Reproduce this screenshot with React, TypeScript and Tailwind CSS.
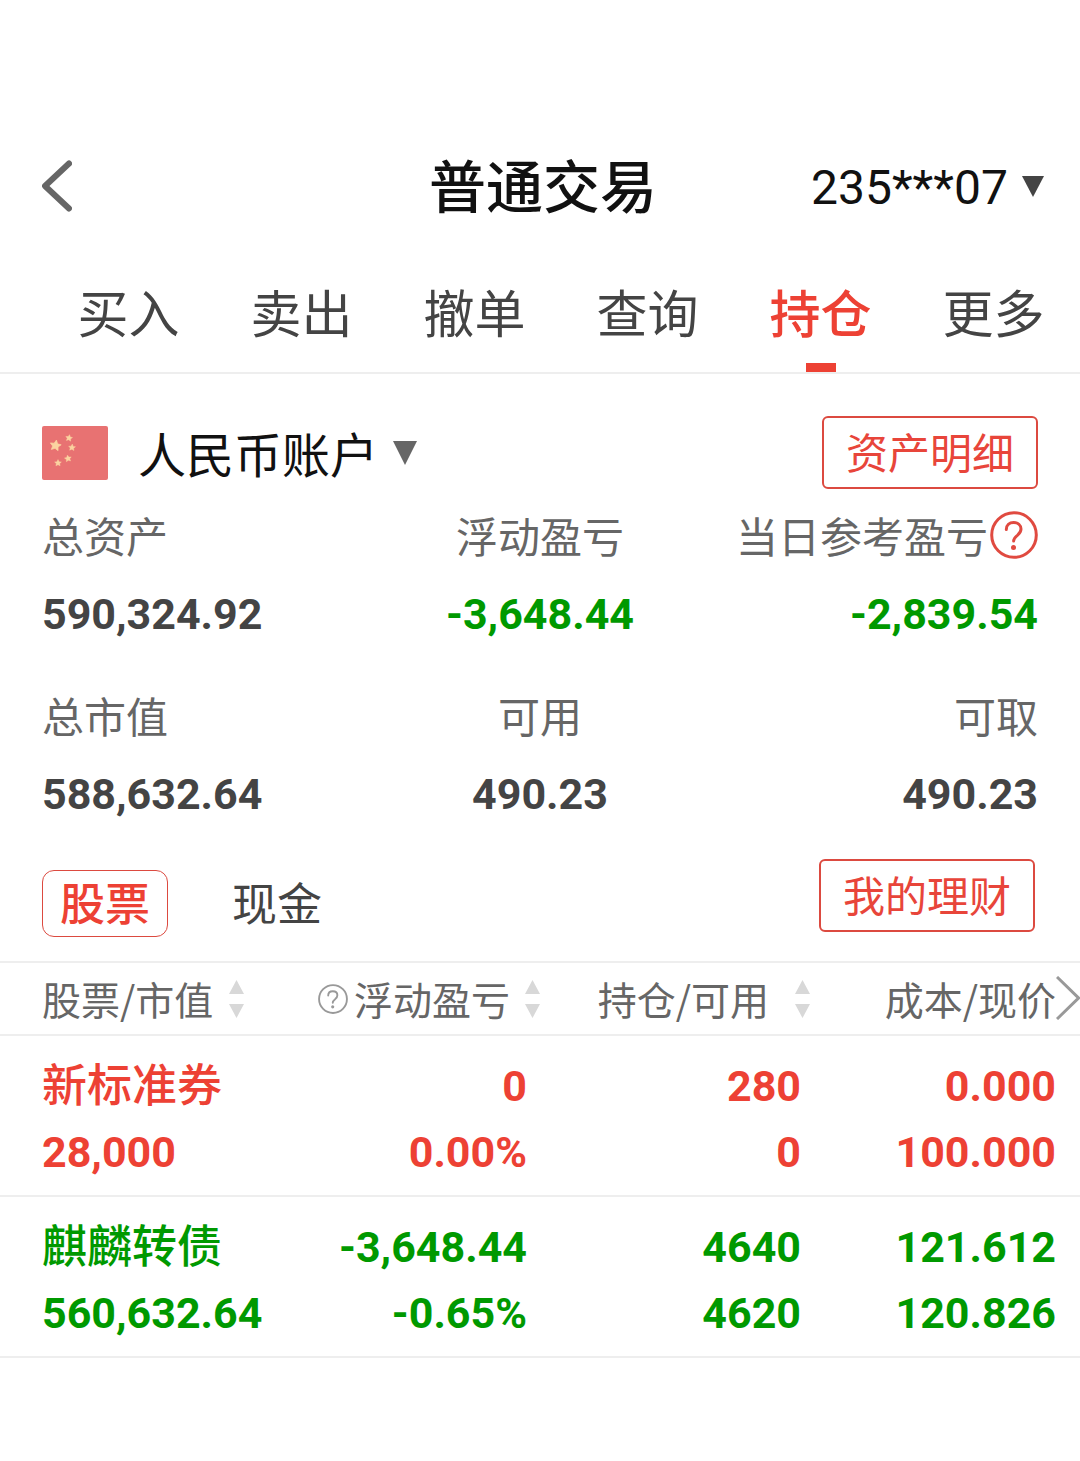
import { useState } from "react";

const RED = "text-[#ed4134]";
const GREEN = "text-[#009900]";
const NUM = "font-['Roboto','Noto_Sans_CJK_SC',sans-serif] font-bold";

const tabs = ["买入", "卖出", "撤单", "查询", "持仓", "更多"];

const summary = [
  { label: "总资产", value: "590,324.92", color: "text-[#444444]" },
  { label: "浮动盈亏", value: "-3,648.44", color: GREEN },
  { label: "当日参考盈亏", value: "-2,839.54", color: GREEN, help: true },
  { label: "总市值", value: "588,632.64", color: "text-[#444444]" },
  { label: "可用", value: "490.23", color: "text-[#444444]" },
  { label: "可取", value: "490.23", color: "text-[#444444]" },
];

const aligns = ["items-start", "items-center", "items-end"];

const holdings = [
  {
    name: "新标准券",
    marketValue: "28,000",
    profit: "0",
    profitRate: "0.00%",
    amount: "280",
    available: "0",
    cost: "0.000",
    price: "100.000",
    color: RED,
  },
  {
    name: "麒麟转债",
    marketValue: "560,632.64",
    profit: "-3,648.44",
    profitRate: "-0.65%",
    amount: "4640",
    available: "4620",
    cost: "121.612",
    price: "120.826",
    color: GREEN,
  },
];

function HelpIcon({ className }: { className: string }) {
  return (
    <svg viewBox="0 0 48 48" fill="none" stroke="currentColor" strokeWidth="3" className={className}>
      <circle cx="24" cy="24" r="22.3" />
      <path d="M16.300 18.500c0-4.400 3.100-7 7.300-7 4.300 0 7.400 2.600 7.400 6.600 0 2.800-1.400 4.300-3.400 6-2.500 2-4 3.100-4 5.900" strokeLinecap="round" />
      <circle cx="23.500" cy="36.500" r="2.500" fill="currentColor" stroke="none" />
    </svg>
  );
}

function Triangle({ className }: { className: string }) {
  return (
    <svg viewBox="0 0 24 24" fill="currentColor" preserveAspectRatio="none" className={className} aria-hidden="true">
      <path d="M0 0h24L12 24z" />
    </svg>
  );
}

function SortArrows() {
  return (
    <svg viewBox="0 0 15 38" fill="#d8d8d8" className="h-[38px] w-[15px] shrink-0" aria-hidden="true">
      <path d="M7.500 0L15 14H0zM0 24h15L7.500 38z" />
    </svg>
  );
}

const STAR = "M0-5L1.600-1.800 5-1.500 2.500.9 3.100 4.200 0 2.600-3.100 4.200-2.500.9-5-1.500-1.600-1.800z";

function Flag() {
  return (
    <svg viewBox="0 0 66 54" className="h-[54px] w-[66px]" role="img" aria-label="CNY">
      <rect width="66" height="54" rx="2" fill="#e87272" />
      <g fill="#fbd3a0" stroke="#fbd3a0" strokeWidth=".6" strokeLinejoin="round">
        <path d={STAR} transform="translate(13.500 19.500) scale(1.100) rotate(10)" />
        <path d={STAR} transform="translate(27 12) scale(.68) rotate(10)" />
        <path d={STAR} transform="translate(30 21.500) scale(.68) rotate(5)" />
        <path d={STAR} transform="translate(26 32.500) scale(.68) rotate(-10)" />
        <path d={STAR} transform="translate(16 37) scale(.68)" />
      </g>
    </svg>
  );
}

export default function App() {
  const [tab, setTab] = useState("持仓");
  const [kind, setKind] = useState("股票");

  return (
    <main lang="zh-CN" className="min-h-screen bg-white pt-[126px] font-['Noto_Sans_CJK_SC',sans-serif]">
      {/* Title bar */}
      <header className="grid h-[120px] grid-cols-[1fr_auto_1fr] items-center pr-9 pl-[42px]">
        <button aria-label="返回" className="w-fit">
          <svg viewBox="0 0 30 52" fill="none" stroke="#666666" strokeWidth="6" strokeLinecap="round" strokeLinejoin="round" className="h-[52px] w-[30px]">
            <path d="M27 3.500L3 26l24 22.500" />
          </svg>
        </button>
        <h1 className="pb-1.5 text-[57px] leading-[72px] font-medium text-[#111111]">普通交易</h1>
        <div className="flex items-center justify-end gap-3.5">
          <select aria-label="资金账号" className="appearance-none bg-transparent pt-1 font-['Roboto',sans-serif] text-5xl text-[#111111]">
            <option>235***07</option>
          </select>
          <Triangle className="h-[21px] w-[22px] text-[#444444]" />
        </div>
      </header>

      {/* Trade tabs */}
      <nav className="grid grid-cols-6 border-b-2 border-[#eeeeee] pl-[42px]">
        {tabs.map((t) => (
          <button
            key={t}
            onClick={() => setTab(t)}
            className={`flex h-[126px] flex-col items-center justify-between pt-7 text-[51px] leading-[74px] ${
              t === tab ? "font-medium text-[#ed4134]" : "text-[#444444]"
            }`}
          >
            {t}
            {t === tab && <span className="h-[9px] w-[30px] bg-[#ed4134]" />}
          </button>
        ))}
      </nav>

      {/* Account summary */}
      <section className="px-[42px] pt-[42px]">
        <div className="flex items-center justify-between">
          <div className="flex items-center">
            <Flag />
            <select aria-label="账户" className="ml-[30px] appearance-none bg-transparent pb-0.5 text-5xl leading-[70px] text-[#111111]">
              <option>人民币账户</option>
            </select>
            <Triangle className="ml-3.5 h-6 w-6 text-[#666666]" />
          </div>
          <button className="h-[73px] rounded-md border-2 border-[#dc4a40] px-[22px] pb-1 text-[42px] leading-[65px] text-[#e8453a]">
            资产明细
          </button>
        </div>

        <dl className="grid grid-cols-3 gap-y-[37px] pt-3">
          {summary.map((item, i) => (
            <div key={item.label} className={`flex flex-col ${aligns[i % 3]}`}>
              <dt className="flex h-[68px] items-center gap-0.5 text-[42px] leading-[68px] whitespace-nowrap text-[#666666]">
                {item.label}
                {item.help && (
                  <button aria-label="当日参考盈亏说明" className="text-[#e04a40]">
                    <HelpIcon className="size-12" />
                  </button>
                )}
              </dt>
              <dd className={`mt-[15px] text-[43px] leading-[60px] ${NUM} ${item.color}`}>{item.value}</dd>
            </div>
          ))}
        </dl>
      </section>

      {/* Asset kind */}
      <div className="flex items-start justify-between pt-[35px] pr-[45px] pb-6 pl-[42px]">
        <div className="flex gap-[46px] pt-[11px]">
          {["股票", "现金"].map((k) => (
            <button
              key={k}
              onClick={() => setKind(k)}
              className={`h-[67px] rounded-xl border px-[17px] pb-1 text-[45px] leading-[61px] ${
                k === kind ? "border-[#dc4a40] font-medium text-[#ed4134]" : "border-transparent text-[#444444]"
              }`}
            >
              {k}
            </button>
          ))}
        </div>
        <button className="h-[73px] rounded-md border-2 border-[#dc4a40] px-[22px] pb-1 text-[42px] leading-[65px] text-[#e8453a]">
          我的理财
        </button>
      </div>

      {/* Holdings */}
      <div className="relative">
        <table className="w-full table-fixed border-collapse">
          <thead className="border-y-2 border-[#eeeeee] text-[39px] leading-[71px] whitespace-nowrap text-[#666666]">
            <tr>
              <th className="p-0 pl-[42px] font-normal">
                <div className="flex items-center gap-4">
                  股票/市值
                  <SortArrows />
                </div>
              </th>
              <th className="p-0 font-normal">
                <div className="flex items-center justify-end">
                  <HelpIcon className="mr-[6px] size-[30px] text-[#999999]" />
                  浮动盈亏
                  <span className="ml-[15px] flex">
                    <SortArrows />
                  </span>
                </div>
              </th>
              <th className="p-0 font-normal">
                <div className="flex items-center justify-end gap-[26px]">
                  持仓/可用
                  <SortArrows />
                </div>
              </th>
              <th className="p-0 pr-6 text-right font-normal">成本/现价</th>
            </tr>
          </thead>
          <tbody>
            {holdings.map((h) => (
              <tr key={h.name} className={`border-b-2 border-[#eeeeee] text-right text-[43px] leading-[66px] ${NUM} ${h.color}`}>
                <td className="p-0 pt-[17px] pb-[10px] pl-[42px] text-left">
                  <div className="pb-[6px] font-['Noto_Sans_CJK_SC',sans-serif] text-[45px] leading-[60px] font-medium">{h.name}</div>
                  <div>{h.marketValue}</div>
                </td>
                <td className="p-0 pt-[17px] pr-[13px] pb-[10px]">
                  <div>{h.profit}</div>
                  <div>{h.profitRate}</div>
                </td>
                <td className="p-0 pt-[17px] pr-[9px] pb-[10px]">
                  <div>{h.amount}</div>
                  <div>{h.available}</div>
                </td>
                <td className="p-0 pt-[17px] pr-6 pb-[10px]">
                  <div>{h.cost}</div>
                  <div>{h.price}</div>
                </td>
              </tr>
            ))}
          </tbody>
        </table>
        <button aria-label="更多列" className="absolute top-[15px] right-0">
          <svg viewBox="0 0 24 44" fill="none" stroke="#999999" strokeWidth="3" className="h-11 w-6">
            <path d="M1 1l21.500 21L1 43" />
          </svg>
        </button>
      </div>
    </main>
  );
}
